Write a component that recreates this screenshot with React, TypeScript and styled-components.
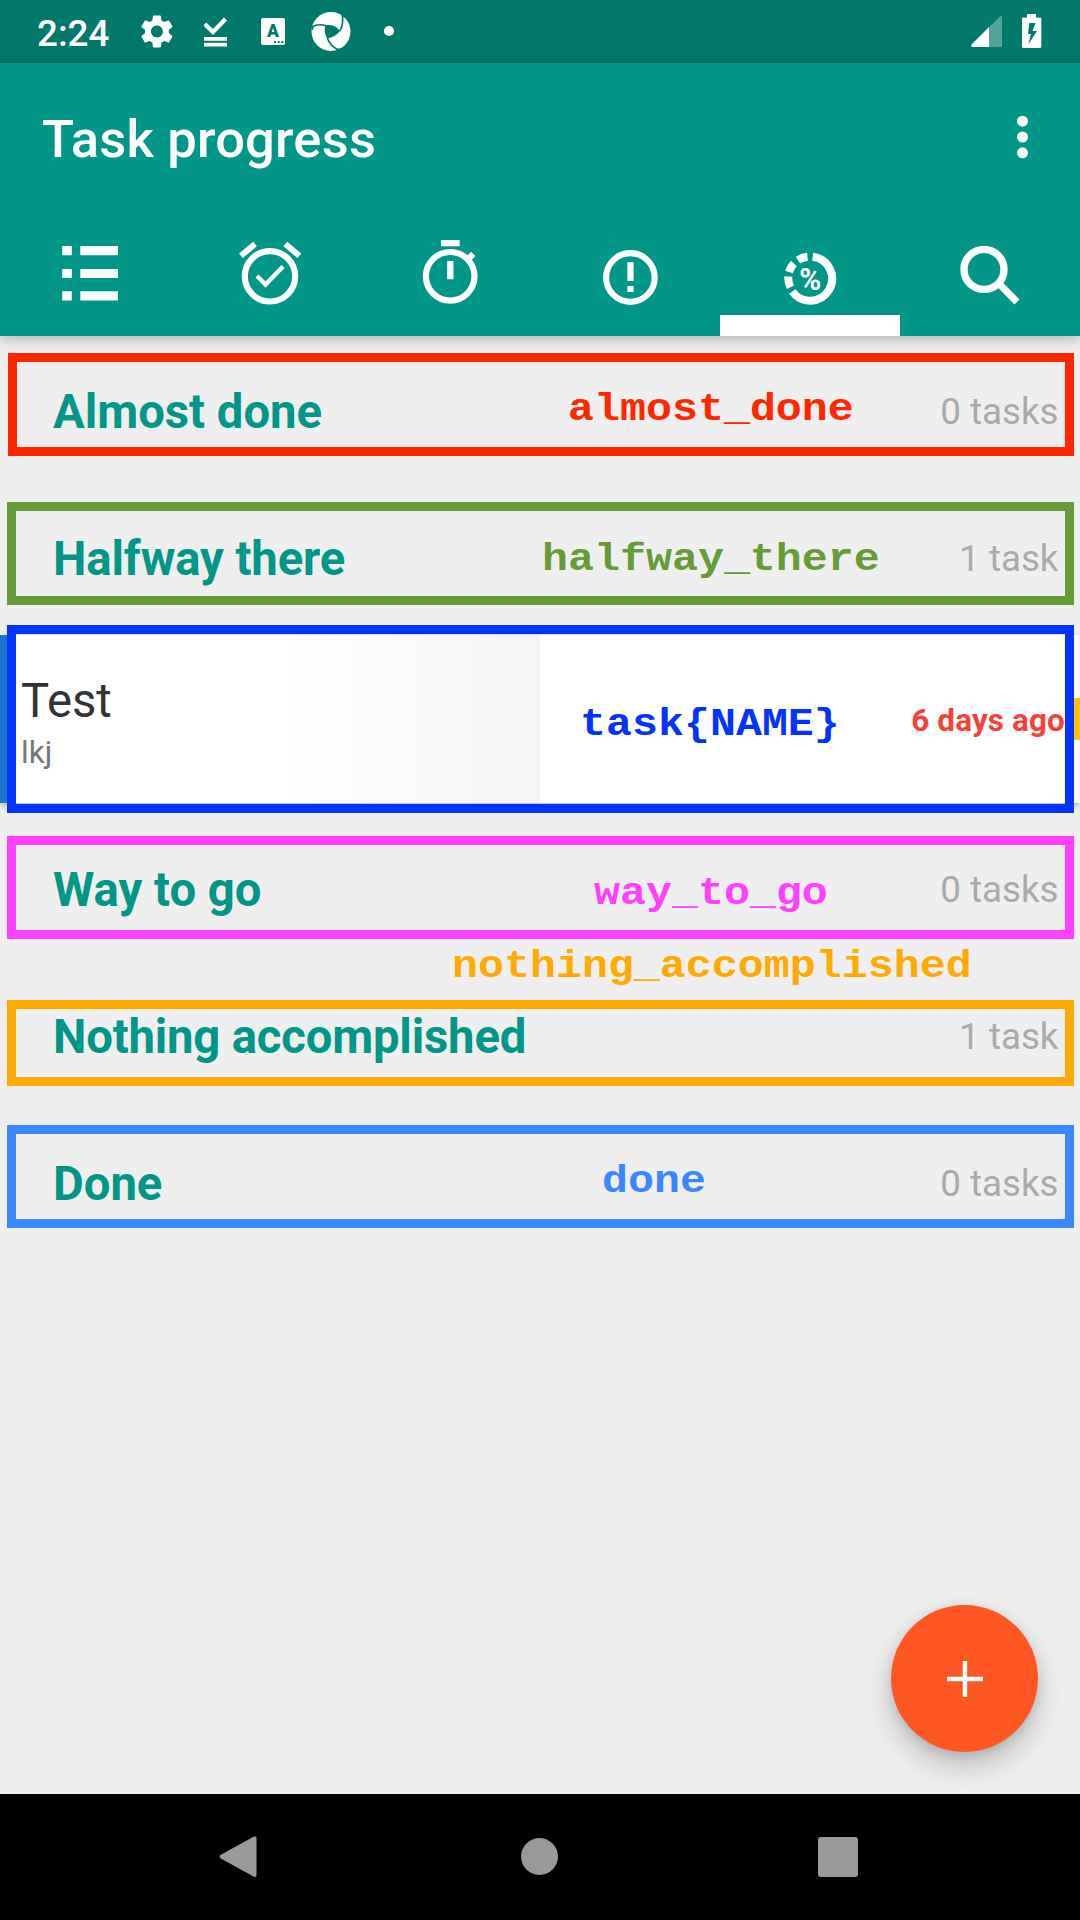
import React from "react";
import styled, { createGlobalStyle } from "styled-components";

const GlobalStyle = createGlobalStyle`
  * { box-sizing: border-box; }
  body { margin: 0; background: #efefef; font-family: Roboto, "Liberation Sans", sans-serif; }
`;

const Screen = styled.div`
  position: relative;
  display: flex;
  flex-direction: column;
  width: 1080px;
  height: 1920px;
  overflow: hidden;
  background: #efefef;
`;

const StatusBar = styled.header`
  display: flex;
  align-items: flex-start;
  justify-content: space-between;
  flex: none;
  height: 63px;
  padding: 0 36px 0 37px;
  background: #00796b;
`;

const StatusGroup = styled.div`
  display: flex;
  align-items: flex-start;
`;

const Clock = styled.span`
  width: 80px;
  margin-right: 20px;
  font-size: 36.75px;
  font-weight: 500;
  line-height: 67px;
  color: #fff;
`;

const StatusIcon = styled.svg<{ $w: number; $gap?: number }>`
  display: block;
  flex: none;
  width: ${(p) => p.$w}px;
  height: 63px;
  margin-right: ${(p) => p.$gap ?? 0}px;
`;

const AppBar = styled.div`
  position: relative;
  flex: none;
  height: 273px;
  background: #009688;
  box-shadow: 0 3px 12px rgba(0, 0, 0, 0.26);
  z-index: 1;
`;

const TitleRow = styled.div`
  display: flex;
  align-items: center;
  justify-content: space-between;
  height: 147px;
  padding: 4px 42px 0 42px;
`;

const Title = styled.h1`
  margin: 0;
  font-size: 52.5px;
  font-weight: 500;
  line-height: 62px;
  letter-spacing: 0.2px;
  color: #fff;
`;

const MoreIcon = styled.svg`
  display: block;
  width: 31px;
  height: 48px;
`;

const TabRow = styled.nav`
  display: grid;
  grid-template-columns: repeat(6, 180px);
  height: 126px;
`;

const Tab = styled.div<{ $active?: boolean }>`
  display: flex;
  justify-content: center;
  padding-top: 26px;
  border-bottom: ${(p) => (p.$active ? "21px solid #fff" : "none")};
`;

const TabIcon = styled.svg`
  display: block;
  width: 72px;
  height: 72px;
`;

const List = styled.main`
  flex: 1;
  padding-top: 2px;
`;

const Section = styled.div`
  display: flex;
  align-items: center;
  justify-content: space-between;
  height: 147px;
  padding: 0 21.5px 0 53px;
`;

const SectionTitle = styled.h2<{ $tracking?: number }>`
  margin: 0;
  font-size: 47.25px;
  font-weight: 700;
  line-height: 56px;
  letter-spacing: ${(p) => p.$tracking ?? 0}px;
  color: #009688;
`;

const SectionCount = styled.span`
  font-size: 36.75px;
  line-height: 44px;
  color: #aaa;
`;

const CardSlot = styled.div`
  height: 184px;
  padding-top: 3px;
`;

const Card = styled.article`
  display: flex;
  align-items: center;
  height: 168px;
  background: linear-gradient(90deg, #fff 0, #fff 268px, #f4f4f4 540px, #fff 540px);
  box-shadow: 0 2px 6px rgba(0, 0, 0, 0.28);
`;

const PriorityStrip = styled.div`
  width: 10px;
  height: 168px;
  background: #1976c8;
`;

const TaskBody = styled.div`
  flex: 1;
  padding: 5px 0 0 11px;
`;

const TaskName = styled.div`
  font-size: 47.25px;
  line-height: 58px;
  color: #333;
`;

const TaskList = styled.div`
  margin-top: 4px;
  font-size: 31.5px;
  line-height: 38px;
  color: #777;
`;

const DueDate = styled.span`
  padding-top: 4px;
  margin-right: 8px;
  font-size: 31.5px;
  font-weight: 700;
  line-height: 38px;
  letter-spacing: 0.1px;
  color: #f44336;
`;

const ProgressMark = styled.div`
  width: 7px;
  height: 42px;
  background: #ffc107;
`;

const Outline = styled.div<{ $top: number; $height: number; $color: string; $left?: number }>`
  position: absolute;
  top: ${(p) => p.$top}px;
  left: ${(p) => p.$left ?? 7}px;
  right: 6px;
  height: ${(p) => p.$height}px;
  border: 9px solid ${(p) => p.$color};
  z-index: 2;
`;

const Label = styled.span<{ $x: number; $baseline: number; $color: string }>`
  position: absolute;
  left: ${(p) => p.$x}px;
  top: ${(p) => p.$baseline - 35.5}px;
  font-family: "Liberation Mono", monospace;
  font-size: 43.3px;
  font-weight: 700;
  line-height: 50px;
  white-space: pre;
  color: ${(p) => p.$color};
  transform: scaleY(0.88);
  transform-origin: 0 38px;
  z-index: 3;
`;

const AddButton = styled.button`
  position: absolute;
  left: 891px;
  top: 1605px;
  display: flex;
  align-items: center;
  justify-content: center;
  width: 147px;
  height: 147px;
  padding: 0;
  border: 0;
  border-radius: 50%;
  background: #ff5722;
  box-shadow: 0 14px 28px rgba(0, 0, 0, 0.22), 0 2px 12px rgba(0, 0, 0, 0.1);
`;

const NavBar = styled.footer`
  position: relative;
  display: grid;
  grid-template-columns: repeat(3, 299px);
  justify-content: center;
  justify-items: center;
  align-items: center;
  flex: none;
  height: 126px;
  background: #000;
`;

const NavIcon = styled.svg`
  display: block;
  width: 44px;
  height: 44px;
`;

const annotations = [
  { label: "almost_done", color: "#ff2600", top: 353, height: 103, left: 8, x: 568, baseline: 419 },
  { label: "halfway_there", color: "#669c35", top: 502, height: 103, x: 542, baseline: 569 },
  { label: "task{NAME}", color: "#0433ff", top: 625, height: 188, x: 580, baseline: 734 },
  { label: "way_to_go", color: "#ff40ff", top: 836, height: 103, x: 594, baseline: 903 },
  { label: "nothing_accomplished", color: "#ffaa00", top: 1000, height: 86, x: 452, baseline: 976 },
  { label: "done", color: "#3a88fe", top: 1125, height: 103, x: 602, baseline: 1191 },
];

function SectionHeader({ title, count, tracking }: { title: string; count: string; tracking?: number }) {
  return (
    <Section>
      <SectionTitle $tracking={tracking}>{title}</SectionTitle>
      <SectionCount>{count}</SectionCount>
    </Section>
  );
}

export default function App() {
  return (
    <>
      <GlobalStyle />
      <Screen>
        <StatusBar>
          <StatusGroup>
            <Clock>2:24</Clock>
            <StatusIcon $w={40} $gap={26.5} viewBox="0 0 40 63">
              <g transform="translate(0 11.6) scale(1.66)" fill="#fff">
                <path d="M19.14 12.94c.04-.3.06-.61.06-.94 0-.32-.02-.64-.07-.94l2.03-1.58c.18-.14.23-.41.12-.61l-1.92-3.32c-.12-.22-.37-.29-.59-.22l-2.39.96c-.5-.38-1.03-.7-1.62-.94l-.36-2.54c-.04-.24-.24-.41-.48-.41h-3.84c-.24 0-.43.17-.47.41l-.36 2.54c-.59.24-1.13.57-1.62.94l-2.39-.96c-.22-.08-.47 0-.59.22L2.74 8.87c-.12.21-.08.47.12.61l2.03 1.58c-.05.3-.09.63-.09.94s.02.64.07.94l-2.03 1.58c-.18.14-.23.41-.12.61l1.92 3.32c.12.22.37.29.59.22l2.39-.96c.5.38 1.03.7 1.62.94l.36 2.54c.05.24.24.41.48.41h3.84c.24 0 .44-.17.47-.41l.36-2.54c.59-.24 1.13-.56 1.62-.94l2.39.96c.22.08.47 0 .59-.22l1.92-3.32c.12-.22.07-.47-.12-.61l-2.01-1.58zM12 15.6c-1.98 0-3.6-1.62-3.6-3.6s1.62-3.6 3.6-3.6 3.6 1.62 3.6 3.6-1.62 3.6-3.6 3.6z" />
              </g>
            </StatusIcon>
            <StatusIcon $w={24} $gap={33.5} viewBox="0 0 24 63">
              <path d="M.8 24 9 32 21.500 19" fill="none" stroke="#fff" strokeWidth="4.200" />
              <path d="M0 37h23v3.800H0zM0 42.800h23v3.600H0z" fill="#fff" />
            </StatusIcon>
            <StatusIcon $w={24} $gap={25.800} viewBox="0 0 24 63">
              <rect x="0" y="18" width="24" height="27" rx="2" fill="#fff" />
              <text x="12" y="37.200" textAnchor="middle" fontFamily="Roboto" fontWeight="900" fontSize="17.500" fill="#00796b">A</text>
              <path d="M13 41h2v2h-2zM16.700 41h2v2h-2zM20.300 41h2v2h-2z" fill="#00796b" />
            </StatusIcon>
            <StatusIcon $w={40} $gap={32.200} viewBox="0 0 40 63">
              <circle cx="20" cy="31.500" r="19.500" fill="#fff" />
              <path d="M14.600 25.500C20 24 25.500 26 29 31c-3 4-7.500 6.600-12.500 7.500C13.500 34.500 13 29.500 14.600 25.500z" fill="#00796b" />
              <path d="M.8 27C5 24.500 10 24.200 15 25.700M28.800 31C31.500 26.500 32.300 20.500 31.200 14.500M16.300 38C18 43 22 47.500 28 50.300" fill="none" stroke="#00796b" strokeWidth="1.700" />
              <path d="M31 12.500 34.500 18 32 17zM0 25.500 1.500 31 3 26.500zM34 47 27 51 26 49z" fill="#00796b" />
            </StatusIcon>
            <StatusIcon $w={12} viewBox="0 0 12 63">
              <circle cx="6" cy="31" r="5.100" fill="#fff" />
            </StatusIcon>
          </StatusGroup>
          <StatusGroup>
            <StatusIcon $w={31} $gap={20} viewBox="0 0 31 63">
              <path d="M18 27.500 29 16.500Q31 15 31 17.500V45.500Q31 47 29.500 47H18z" fill="#fff" opacity=".32" />
              <path d="M18 27V47H1.500Q-.8 46.500.6 44.500z" fill="#fff" />
            </StatusIcon>
            <StatusIcon $w={22} viewBox="0 0 22 63">
              <path fillRule="evenodd" fill="#fff" d="M5 14h9v3.500h4q1.300 0 1.300 1.300v27.800q0 1.300-1.300 1.300H1.300Q0 47.900 0 46.600V18.800q0-1.300 1.300-1.300H5zM7.300 23 6 34h3L6.300 44.500 15 31h-4.500L13.500 23z" />
            </StatusIcon>
          </StatusGroup>
        </StatusBar>

        <AppBar>
          <TitleRow>
            <Title>Task progress</Title>
            <MoreIcon viewBox="0 0 31 48" fill="#fff">
              <circle cx="15.500" cy="6.200" r="5.500" />
              <circle cx="15.500" cy="22" r="5.500" />
              <circle cx="15.500" cy="37.800" r="5.500" />
            </MoreIcon>
          </TitleRow>
          <TabRow>
            <Tab>
              <TabIcon viewBox="0 0 72 72" fill="#fff">
                <path d="M8.200 10h9.600v9.300H8.200zM26.300 10H64v9.300H26.300zM8.200 33h9.600v9H8.200zM26.300 33H64v9H26.300zM8.200 55.300h9.600v9.300H8.200zM26.300 55.300H64v9.300H26.300z" />
              </TabIcon>
            </Tab>
            <Tab>
              <TabIcon viewBox="0 0 72 72" fill="none" stroke="#fff">
                <circle cx="36" cy="40.300" r="25.200" strokeWidth="6.200" />
                <path d="M6.900 19.800 21 7.900M51.300 7.900 65.400 19.800" strokeWidth="5.900" />
                <path d="M23 40 31.500 48.500 49 30.500" strokeWidth="4.400" />
              </TabIcon>
            </Tab>
            <Tab>
              <TabIcon viewBox="0 0 72 72" fill="none" stroke="#fff">
                <circle cx="36.200" cy="40.300" r="24.300" strokeWidth="6.200" />
                <path d="M27 7.200H45.700M36.300 25V43.300" strokeWidth="6.300" />
                <path d="M54.500 22.800 59.300 17.800" strokeWidth="6" />
              </TabIcon>
            </Tab>
            <Tab>
              <TabIcon viewBox="0 0 72 72" fill="none" stroke="#fff">
                <circle cx="36.400" cy="41.500" r="24.300" strokeWidth="6.200" />
                <path d="M36.500 26.300V45M36.500 50V56" strokeWidth="6.300" />
              </TabIcon>
            </Tab>
            <Tab $active>
              <TabIcon viewBox="0 0 72 72" fill="none" stroke="#fff" strokeWidth="8">
                <path d="M38.700 20.800A22 22 0 1 1 18.300 55.500M16.400 51.200A22 22 0 0 1 14.200 40.500M14.900 36A22 22 0 0 1 19.900 27.500M23.900 24.200A22 22 0 0 1 33.500 20.800" />
                <text x="36.300" y="53.500" textAnchor="middle" fontFamily="Roboto" fontWeight="700" fontSize="31" fill="#fff" stroke="none" textLength="22" lengthAdjust="spacingAndGlyphs">%</text>
              </TabIcon>
            </Tab>
            <Tab>
              <TabIcon viewBox="0 0 72 72" fill="none" stroke="#fff">
                <circle cx="30" cy="33.400" r="20" strokeWidth="7.400" />
                <path d="M46.800 49.500 63 66" strokeWidth="7" />
              </TabIcon>
            </Tab>
          </TabRow>
        </AppBar>

        <List>
          <SectionHeader title="Almost done" count="0 tasks" />
          <SectionHeader title="Halfway there" count="1 task" tracking={-0.1} />
          <CardSlot>
            <Card>
              <PriorityStrip />
              <TaskBody>
                <TaskName>Test</TaskName>
                <TaskList>lkj</TaskList>
              </TaskBody>
              <DueDate>6 days ago</DueDate>
              <ProgressMark />
            </Card>
          </CardSlot>
          <SectionHeader title="Way to go" count="0 tasks" />
          <SectionHeader title="Nothing accomplished" count="1 task" tracking={-0.18} />
          <SectionHeader title="Done" count="0 tasks" />
        </List>

        {annotations.map((a) => (
          <React.Fragment key={a.label}>
            <Outline $top={a.top} $height={a.height} $color={a.color} $left={a.left} />
            <Label $x={a.x} $baseline={a.baseline} $color={a.color}>{a.label}</Label>
          </React.Fragment>
        ))}

        <AddButton aria-label="Add task">
          <svg width="36" height="36" viewBox="0 0 36 36" fill="none" stroke="#fff" strokeWidth="4.400">
            <path d="M18 0V36M0 18H36" />
          </svg>
        </AddButton>

        <NavBar>
          <NavIcon viewBox="0 0 44 44" fill="#999">
            <path d="M1.800 19.700 34.500 1.800Q37.500.5 37.500 3V40Q37.500 43 34.500 41.500L1.800 23.500Q-.5 21.600 1.800 19.700z" />
          </NavIcon>
          <NavIcon viewBox="0 0 44 44" fill="#999">
            <circle cx="21.500" cy="21.500" r="18.500" />
          </NavIcon>
          <NavIcon viewBox="0 0 44 44" fill="#999">
            <rect x="1" y="2" width="40" height="40" rx="3" />
          </NavIcon>
        </NavBar>
      </Screen>
    </>
  );
}
